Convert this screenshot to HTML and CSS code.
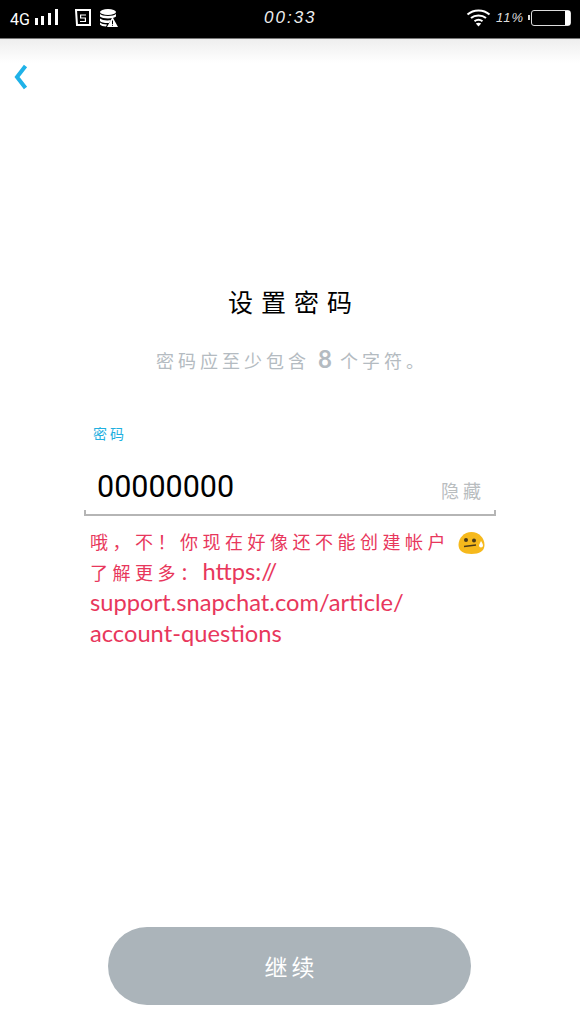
FILE: index.html
```html
<!DOCTYPE html>
<html lang="zh-CN">
  <head>
    <meta charset="UTF-8" />
    <meta name="viewport" content="width=device-width, initial-scale=1.0" />
    <title>设置密码</title>
    <link rel="stylesheet" href="styles.css">
  </head>
  <body>
    <div class="phone">
      <div class="status-bar">
        <div class="status-left">
          <span class="net">4G</span>
          <svg class="signal" width="23" height="17" viewBox="0 0 23 17">
            <rect x="0" y="9" width="3" height="7" fill="#fff" />
            <rect x="6" y="7" width="3" height="9" fill="#fff" />
            <rect x="13" y="4" width="3" height="12" fill="#fff" />
            <rect x="20" y="0" width="3" height="16" fill="#fff" />
          </svg>
          <svg class="icon-s" width="16" height="18" viewBox="0 0 16 18">
            <path d="M1 1h14v15H2z" fill="none" stroke="#fff" stroke-width="2" />
            <path d="M5 5.500h6v1H6.200v2H11v4.500H5v-1h4.800v-2.500H5z" fill="#fff" />
          </svg>
          <svg class="icon-db" width="18" height="18" viewBox="0 0 18 18">
            <ellipse cx="8" cy="3" rx="8" ry="3" fill="#fff" />
            <path d="M0 5c2 2.500 14 2.500 16 0v2.500c-2 2.500-14 2.500-16 0z" fill="#fff" />
            <path d="M0 9.500c2 2 8 2.500 11 1.500l-2 3c-4 .2-8-.5-9-2z" fill="#fff" />
            <path d="M0 13.500c1 1 4 2 7 2l-1 2c-3 0-5-.8-6-2z" fill="#fff" />
            <path d="M12.500 8l5.500 10H7z" fill="#fff" />
            <path d="M12 11.500h1v3.500h-1zM12 15.700h1v1h-1z" fill="#000" />
          </svg>
        </div>
        <span class="clock">00:33</span>
        <div class="status-right">
          <svg class="wifi" width="25" height="19" viewBox="0 0 25 19">
            <path d="M1.500 6.500c6-5.500 16-5.500 22 0M5 10c4-3.500 11-3.500 15 0M8.500 13.300c2.300-1.800 5.700-1.800 8 0" fill="none" stroke="#fff" stroke-width="2" />
            <path d="M9.800 15.500c1.500-1 4-1 5.400 0l-2.700 3z" fill="#fff" />
          </svg>
          <span class="percent">11%</span>
          <div class="battery"><div class="battery-level"></div></div>
        </div>
      </div>

      <div class="top-shade">
        <svg class="back" width="16" height="26" viewBox="0 0 16 26">
          <path d="M12.500 2L4 13l8.500 11" fill="none" stroke="#1fb2e8" stroke-width="4" />
        </svg>
      </div>

      <main class="content">
        <h1 class="title">设置密码</h1>
        <p class="subtitle">密码应至少包含 <span class="num">8</span> 个字符。</p>

        <div class="form">
          <label class="field-label">密码</label>
          <div class="field">
            <span class="field-value">00000000</span>
            <span class="field-toggle">隐藏</span>
          </div>
          <p class="error">
            <span class="cjk">哦，不！你现在好像还不能创建帐户</span>
            <svg class="emoji" width="27" height="24" viewBox="0 0 27 24">
              <path d="M13.500 1C21 1 26.500 7 26.500 14c0 6-5 9-13 9S.5 20 .5 14C.5 7 6 1 13.500 1z" fill="#f6b91c" />
              <circle cx="8" cy="9" r="2" fill="#4a3a1a" />
              <circle cx="16" cy="9.500" r="2" fill="#4a3a1a" />
              <path d="M6 15.500l12-1.500" stroke="#4a3a1a" stroke-width="1.500" />
              <path d="M23 10c1.500 2.500 2 3.500 2 4.500a2 2 0 0 1-4 0c0-1 1-2 2-4.500z" fill="#fff" />
            </svg>
            <br />
            <span class="cjk">了解更多：</span>https://<br />
            support.snapchat.com/article/<br />
            account-questions
          </p>
        </div>
      </main>

      <div class="footer">
        <button class="continue">继续</button>
      </div>
    </div>
  </body>
</html>
```

FILE: styles.css
```css
* {
  box-sizing: border-box;
}

html,
body {
  margin: 0;
  padding: 0;
  background: #fff;
}

body {
  font-family: "Noto Sans CJK SC", "Noto Sans", sans-serif;
}

.phone {
  width: 580px;
  height: 1031px;
  display: flex;
  flex-direction: column;
  overflow: hidden;
}

.status-bar {
  height: 39px;
  flex-shrink: 0;
  background: #000;
  border-bottom: 1px solid #777;
  color: #fff;
  display: flex;
  align-items: center;
  justify-content: space-between;
  padding: 0 9px 3px 10px;
  position: relative;
}

.status-left {
  display: flex;
  align-items: center;
}

.net {
  font-family: Roboto, sans-serif;
  font-size: 16px;
  margin-right: 5px;
  padding-top: 3px;
}

.signal {
  margin-right: 17px;
}

.icon-s {
  margin-right: 9px;
}

.clock {
  position: absolute;
  left: 264px;
  top: 8px;
  font-family: "Liberation Sans", sans-serif;
  font-size: 17px;
  font-style: italic;
  letter-spacing: 2px;
  color: #eee;
}

.status-right {
  display: flex;
  align-items: center;
}

.wifi {
  margin-right: 5px;
}

.percent {
  font-family: "Liberation Sans", sans-serif;
  font-size: 13px;
  font-style: italic;
  letter-spacing: 1px;
  color: #ddd;
  margin-right: 7px;
}

.battery {
  width: 40px;
  height: 16px;
  border: 1.500px solid #ddd;
  border-radius: 3px;
  display: flex;
  justify-content: flex-end;
  position: relative;
}

.battery::before {
  content: "";
  position: absolute;
  left: -4px;
  top: 4px;
  width: 2px;
  height: 5px;
  background: #ddd;
}

.battery-level {
  width: 5px;
  background: #fff;
}

.top-shade {
  height: 62px;
  flex-shrink: 0;
  background: linear-gradient(#eeeeee, #ffffff 24px);
  padding: 25px 0 0 13px;
}

.back {
  display: block;
}

.content {
  flex: 1;
  padding-top: 183px;
  text-align: center;
}

.title {
  margin: 0;
  font-size: 25px;
  line-height: 34px;
  font-weight: 400;
  letter-spacing: 8px;
  padding-left: 8px;
  color: #000;
}

.subtitle {
  margin: 29px 0 0;
  font-size: 18px;
  line-height: 26px;
  letter-spacing: 4px;
  padding-left: 4px;
  color: #b4bbc1;
}

.num {
  font-family: Lato, sans-serif;
  font-size: 24px;
  font-weight: 700;
  letter-spacing: 0;
  line-height: 1;
}

.form {
  margin: 50px 84px 0;
  text-align: left;
}

.field-label {
  display: block;
  font-size: 14px;
  line-height: 20px;
  letter-spacing: 3px;
  color: #1fb0e0;
  padding-left: 9px;
}

.field {
  height: 62px;
  margin-top: 11px;
  border: 2px solid #b5b5b5;
  border-top: 0;
  border-radius: 0 0 2px 2px;
  border-image: linear-gradient(transparent 90%, #b5b5b5 90%) 2;
  display: flex;
  align-items: flex-end;
  justify-content: space-between;
  padding: 0 13px 5px 11px;
}

.field-value {
  font-family: Roboto, sans-serif;
  font-size: 30.500px;
  line-height: 44px;
  color: #000;
}

.field-toggle {
  font-size: 18px;
  line-height: 26px;
  letter-spacing: 4px;
  margin-right: -4px;
  margin-bottom: 6px;
  color: #b9bdbf;
}

.error {
  margin: 9px 0 0 6px;
  font-family: Lato, sans-serif;
  font-size: 23.700px;
  line-height: 31px;
  color: #e8375c;
  white-space: nowrap;
}

.cjk {
  font-family: "Noto Sans CJK SC", sans-serif;
  font-size: 18px;
  line-height: 1;
  letter-spacing: 4.500px;
}

.emoji {
  vertical-align: -6px;
  margin-left: 2px;
}

.footer {
  padding: 0 109px 26px 108px;
}

.continue {
  display: block;
  width: 100%;
  height: 78px;
  border: 0;
  border-radius: 39px;
  background: #abb4ba;
  color: #fff;
  font-family: "Noto Sans CJK SC", sans-serif;
  font-size: 23px;
  letter-spacing: 4px;
  padding: 0 0 0 4px;
}
```
